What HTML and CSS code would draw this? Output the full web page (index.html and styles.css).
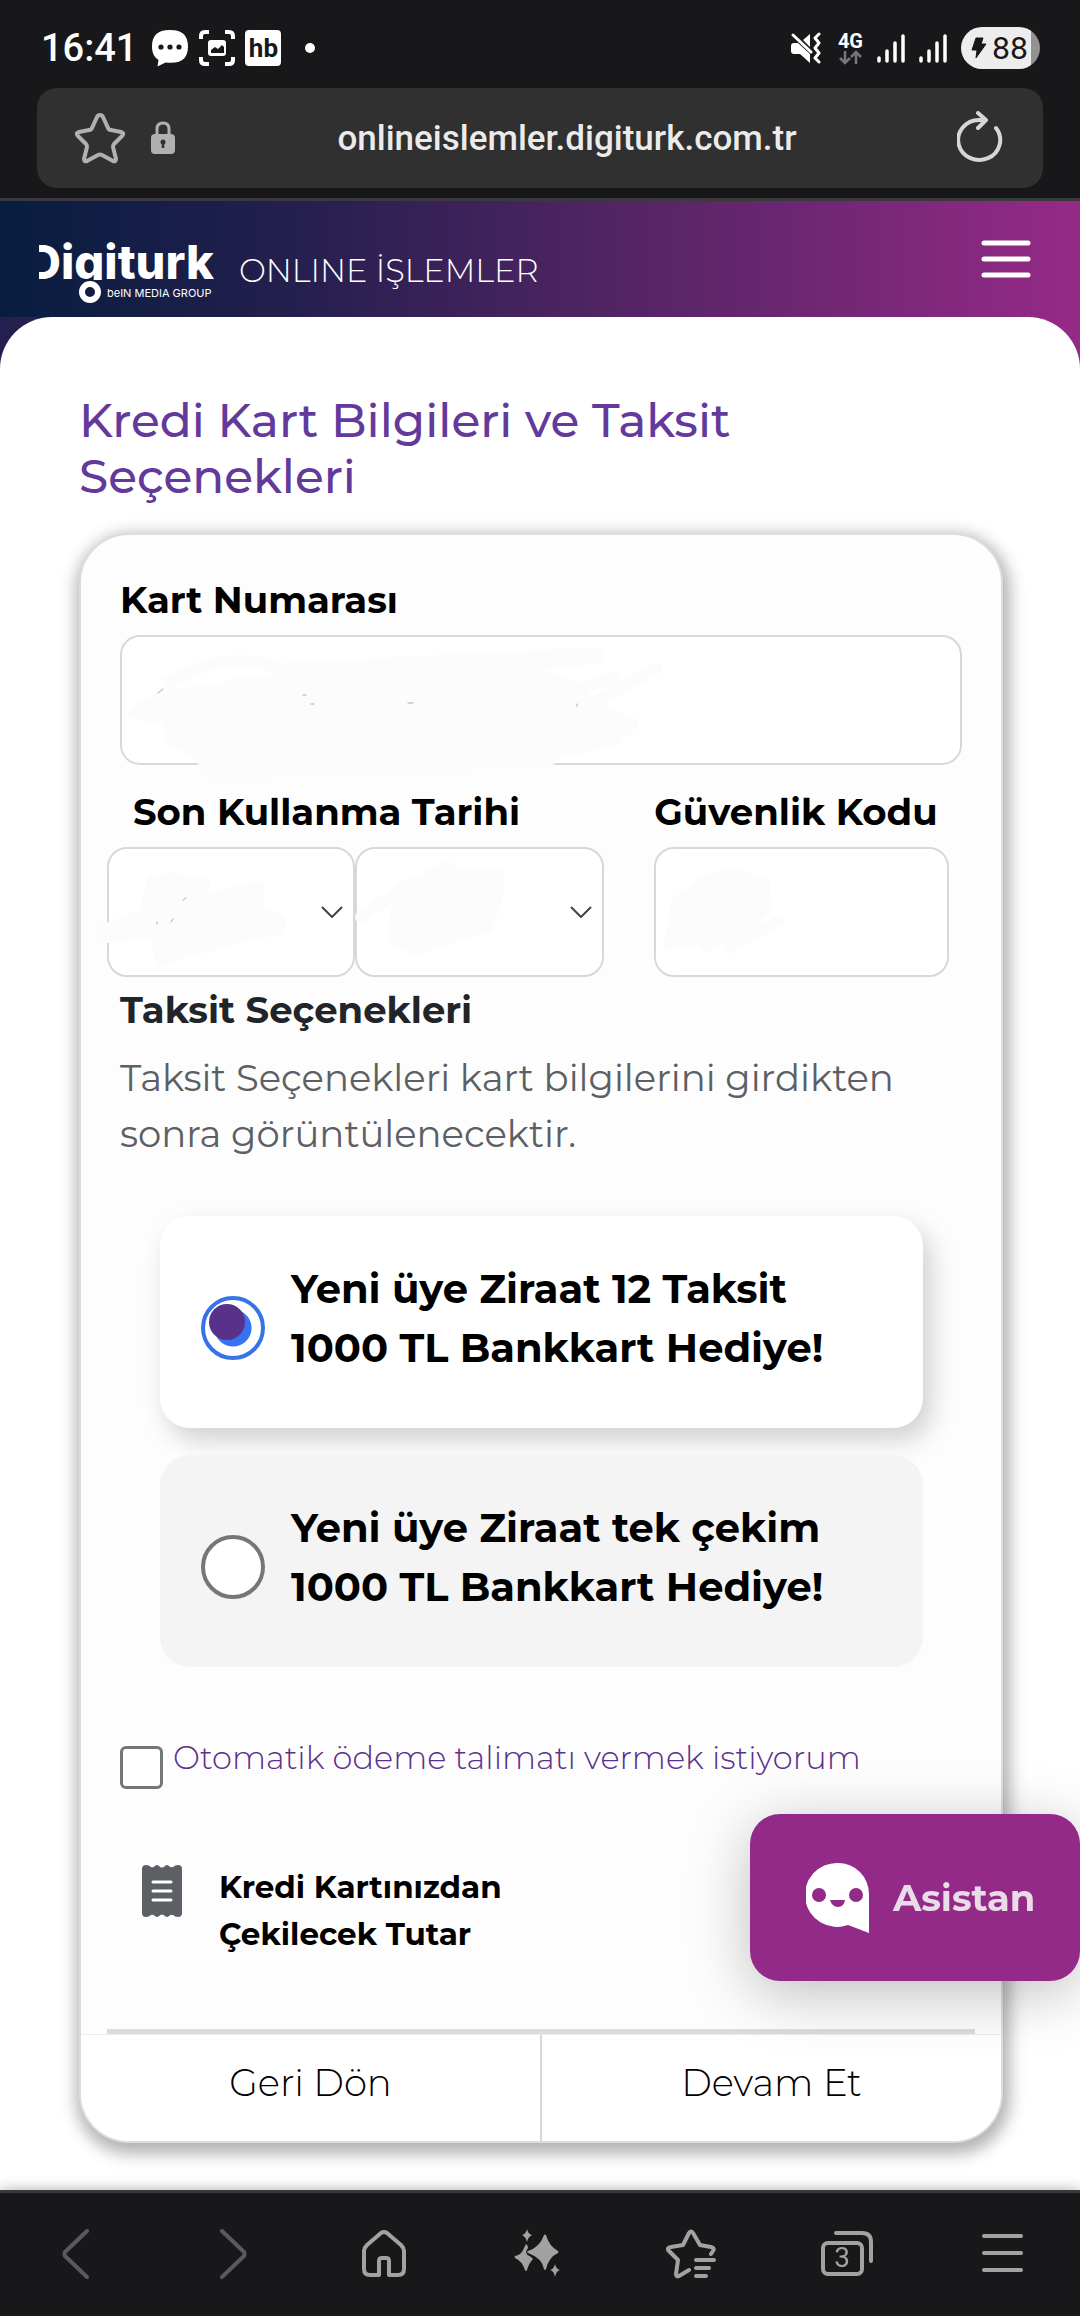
FILE: index.html
```html
<!DOCTYPE html>
<html lang="tr">
<head>
    <meta charset="UTF-8">
    <meta name="viewport" content="width=device-width, initial-scale=1.0">
    <title>Digiturk Online İşlemler</title>
    <link rel="stylesheet" href="styles.css">
</head>
<body>
    <div class="browser-top">
        <div class="status-bar">
            <span class="clock">16:41</span>
            <svg class="status-icon" viewBox="0 0 38 38" width="38" height="38">
                <path d="M19 1C6 1 1 7 1 17.500C1 24 3 28 7.500 31L6.500 37.500L14.500 33.500C31 35.500 37 29 37 17.500C37 7 32 1 19 1Z" fill="#fff"/>
                <circle cx="10" cy="18" r="2.600" fill="#18181a"/>
                <circle cx="19" cy="18" r="2.600" fill="#18181a"/>
                <circle cx="28" cy="18" r="2.600" fill="#18181a"/>
            </svg>
            <svg class="status-icon" viewBox="0 0 36 38" width="36" height="38">
                <path d="M2 10V7Q2 3 6 3H10M26 3H30Q34 3 34 7V10M34 28V31Q34 35 30 35H26M10 35H6Q2 35 2 31V28" fill="none" stroke="#fff" stroke-width="4"/>
                <rect x="9" y="11" width="18" height="16" rx="3" fill="#fff"/>
                <path d="M12 24V21L16 18L19 20L23 16L25 18V24Z" fill="#18181a"/>
            </svg>
            <span class="app-badge">hb</span>
            <span class="dot"></span>
            <svg class="mute" viewBox="0 0 32 32" width="32" height="32">
                <path d="M4 11H8L20 22V31L10 22H4Q1 22 1 19V14Q1 11 4 11ZM13 8L20 2V15Z" fill="#fff"/>
                <path d="M3 3L21 20" stroke="#fff" stroke-width="3" stroke-linecap="round"/>
                <path d="M29 2L25 6L29 11L25 16L29 21L25 26L29 30" fill="none" stroke="#fff" stroke-width="3" stroke-linejoin="round" stroke-linecap="round"/>
            </svg>
            <div class="network">
                <span>4G</span>
                <svg viewBox="0 0 24 15" width="24" height="15">
                    <path d="M7 1V13M2 8L7 13L12 8M18 14V2M13 7L18 2L23 7" fill="none" stroke="#77777a" stroke-width="2.500"/>
                </svg>
            </div>
            <svg class="signal" viewBox="0 0 28 32" width="28" height="32">
                <path d="M2 26V29M10 19V29M18 11V29M26 4V29" stroke="#fff" stroke-width="3.500" stroke-linecap="round"/>
            </svg>
            <svg class="signal" viewBox="0 0 28 32" width="28" height="32">
                <path d="M2 26V29M10 19V29M18 11V29M26 4V29" stroke="#fff" stroke-width="3.500" stroke-linecap="round"/>
            </svg>
            <div class="battery">
                <svg viewBox="0 0 16 22" width="16" height="22">
                    <path d="M5 1H12L10 7H15L5 21L6 13H1Z" fill="#18181a" stroke="#18181a" stroke-linejoin="round"/>
                </svg>
                <span>88</span>
            </div>
        </div>
        <div class="url-bar">
            <button type="button" class="icon-btn" aria-label="Yer imi">
                <svg viewBox="0 0 52 52" width="52" height="52">
                    <path d="M26 3Q28 3 29 5L34 16Q35 18 37 18L47 20Q51 21 48 24L40 32Q39 33 39 35L42 47Q42 50 39 49L28 43Q26 42 24 43L13 49Q10 50 10 47L13 35Q13 33 12 32L4 24Q1 21 5 20L15 18Q17 18 18 16L23 5Q24 3 26 3Z" fill="none" stroke="#b0b0b0" stroke-width="4" stroke-linejoin="round"/>
                </svg>
            </button>
            <svg class="lock" viewBox="0 0 24 34" width="24" height="34">
                <path d="M6 16V8Q6 2 12 2T18 8V16" fill="none" stroke="#b0b0b0" stroke-width="3"/>
                <rect x="0" y="13" width="24" height="20" rx="4" fill="#b0b0b0"/>
                <circle cx="12" cy="21" r="2.500" fill="#303030"/>
                <path d="M12 21V27" stroke="#303030" stroke-width="2.500"/>
            </svg>
            <span class="url">onlineislemler.digiturk.com.tr</span>
            <button type="button" class="icon-btn" aria-label="Yenile">
                <svg viewBox="0 0 46 54" width="46" height="54">
                    <path d="M39 17A21 20 0 1 1 22 9H28" fill="none" stroke="#d6d6d6" stroke-width="4" stroke-linecap="round"/>
                    <path d="M21 2L29 9L21 17" fill="none" stroke="#d6d6d6" stroke-width="4" stroke-linecap="round" stroke-linejoin="round"/>
                </svg>
            </button>
        </div>
    </div>

    <header class="site-header">
        <a href="#" class="brand">
            <svg class="logo" viewBox="0 0 180 70" width="180" height="70">
                <defs>
                    <clipPath id="wordmark"><rect x="0" y="0" width="180" height="46"/></clipPath>
                </defs>
                <g clip-path="url(#wordmark)">
                    <text class="logo-name" x="-12" y="45">Digiturk</text>
                </g>
                <circle cx="51" cy="58" r="8" fill="none" stroke="#fff" stroke-width="6"/>
                <text class="logo-sub" x="68" y="63">beIN MEDIA GROUP</text>
            </svg>
            <span class="brand-title">ONLINE İŞLEMLER</span>
        </a>
        <button type="button" class="menu-btn" aria-label="Menü">
            <svg viewBox="0 0 50 40" width="50" height="40">
                <path d="M3 4H47M3 20H47M3 36H47" stroke="#fff" stroke-width="5" stroke-linecap="round"/>
            </svg>
        </button>
    </header>

    <div class="page">
        <main class="content">
            <h1 class="page-title">Kredi Kart Bilgileri ve Taksit Seçenekleri</h1>

            <form class="card">
                <div class="card-body">
                    <label class="field-label" for="cardNumber">Kart Numarası</label>
                    <div class="field-wrap">
                        <input class="field" type="text" id="cardNumber" inputmode="numeric">
                        <svg class="smudge" viewBox="0 0 560 150" width="560" height="150">
                            <path d="M14 78L43 60L100 56L118 48L300 38L400 34L450 50L470 69L512 89L493 106L440 116L431 124L91 138L78 119L51 103L48 84Z"/>
                            <path d="M48 48Q110 12 160 34L475 18M300 44L478 22M440 60L495 42M470 70L536 33" fill="none"/>
                            <path class="speck" d="M38 58L43 54M183 60H186M191 69H194M288 68H293M457 69V71"/>
                        </svg>
                    </div>

                    <div class="field-row">
                        <div class="expiry">
                            <label class="field-label" for="expMonth">Son Kullanma Tarihi</label>
                            <div class="selects">
                                <div class="field-wrap">
                                    <select class="field" id="expMonth">
                                        <option value=""></option>
                                    </select>
                                    <svg class="smudge" viewBox="0 0 200 130" width="200" height="130">
                                        <path d="M-6 84L37 68L46 35L66 32L98 37L94 54L151 40L150 62L174 75L172 82L148 86L113 96L80 104L54 114L52 100L45 86L1 90Z"/>
                                        <path class="speck" d="M76 53L79 51M50 75V77M64 75L66 72"/>
                                    </svg>
                                </div>
                                <div class="field-wrap">
                                    <select class="field" id="expYear" aria-label="Yıl">
                                        <option value=""></option>
                                    </select>
                                    <svg class="smudge" viewBox="0 0 200 130" width="200" height="130">
                                        <path d="M38 93L44 54L70 32L92 20L100 28L143 27L142 50L132 80L100 89L62 102ZM58 34L6 70"/>
                                    </svg>
                                </div>
                            </div>
                        </div>
                        <div class="cvv">
                            <label class="field-label" for="cvv">Güvenlik Kodu</label>
                            <div class="field-wrap">
                                <input class="field" type="text" id="cvv" inputmode="numeric">
                                <svg class="smudge" viewBox="0 0 200 130" width="200" height="130">
                                    <path d="M15 97L24 55L50 34L80 27L110 38L112 62L84 82L53 100L46 94ZM125 73L75 101"/>
                                </svg>
                            </div>
                        </div>
                    </div>

                    <h2 class="section-title">Taksit Seçenekleri</h2>
                    <p class="hint">Taksit Seçenekleri kart bilgilerini girdikten sonra görüntülenecektir.</p>

                    <div class="options">
                        <label class="option selected">
                            <input type="radio" name="campaign" value="12" checked>
                            <span>Yeni üye Ziraat 12 Taksit<br>1000 TL Bankkart Hediye!</span>
                        </label>
                        <label class="option">
                            <input type="radio" name="campaign" value="1">
                            <span>Yeni üye Ziraat tek çekim<br>1000 TL Bankkart Hediye!</span>
                        </label>
                    </div>

                    <div class="auto-pay">
                        <input type="checkbox" id="autoPay">
                        <label for="autoPay">Otomatik ödeme talimatı vermek istiyorum</label>
                    </div>

                    <div class="total">
                        <svg viewBox="0 0 42 54" width="42" height="54">
                            <path d="M1 5Q1 1 5 1Q8 1 10 3Q12 4 14 2Q16 0 18 2Q21 5 24 2Q26 0 28 2Q30 4 32 3Q34 1 37 1Q41 1 41 5V49Q41 53 37 53Q34 53 32 51Q30 50 28 52Q26 54 24 52Q21 49 18 52Q16 54 14 52Q12 50 10 51Q8 53 5 53Q1 53 1 49Z" fill="#5c5f64"/>
                            <path d="M12 18H30M12 27H30M12 36H30" stroke="#fff" stroke-width="3" stroke-linecap="round"/>
                        </svg>
                        <span>Kredi Kartınızdan<br>Çekilecek Tutar</span>
                    </div>
                    <hr class="divider">
                </div>
                <div class="card-actions">
                    <button type="button">Geri Dön</button>
                    <button type="submit">Devam Et</button>
                </div>
            </form>
        </main>
    </div>

    <button type="button" class="assistant">
        <svg viewBox="0 0 64 72" width="64" height="72">
            <path d="M32 1A31 31 0 0 1 63 32V71L42 63A32 32 0 1 1 32 1Z" fill="#fff"/>
            <circle cx="13" cy="33" r="7" fill="#942a87"/>
            <circle cx="50" cy="33" r="7" fill="#942a87"/>
            <path d="M24 38H39Q38 45 32 45T24 38Z" fill="#942a87"/>
        </svg>
        <span>Asistan</span>
    </button>

    <nav class="browser-nav">
        <button type="button" aria-label="Geri">
            <svg viewBox="0 0 50 50" width="50" height="50"><path d="M35 2L13 23Q12 25 13 27L35 48" fill="none" stroke="#5a5a5c" stroke-width="4" stroke-linecap="round"/></svg>
        </button>
        <button type="button" aria-label="İleri">
            <svg viewBox="0 0 50 50" width="50" height="50"><path d="M16 2L38 23Q39 25 38 27L16 48" fill="none" stroke="#5a5a5c" stroke-width="4" stroke-linecap="round"/></svg>
        </button>
        <button type="button" aria-label="Ana sayfa">
            <svg viewBox="0 0 50 50" width="50" height="50"><path d="M20 46H11Q5 46 5 40V22Q5 19 8 16L22 4Q25 2 28 4L42 16Q45 19 45 22V40Q45 46 39 46H30V32Q30 29 27 29H23Q20 29 20 32Z" fill="none" stroke="#a2a2a3" stroke-width="4" stroke-linejoin="round"/></svg>
        </button>
        <button type="button" aria-label="Tarama asistanı">
            <svg viewBox="0 0 50 50" width="50" height="50">
                <g fill="#a2a2a3">
                    <path d="M14 0Q15 5 19 6Q15 8 14 13Q13 8 9 6Q13 5 14 0Z"/>
                    <path d="M13 15Q15 16 15 19Q10 25 18 28L20 30Q16 34 14 41Q13 43 12 41Q9 32 2 29Q1 28 2 27Q8 26 10 21Z"/>
                    <path d="M31 6Q32 5 33 6Q36 17 45 22Q46 23 45 24Q36 28 33 40Q32 42 31 40Q29 29 15 24Q13 23 15 22Q27 18 31 6Z"/>
                    <path d="M42 35Q43 40 47 41Q43 42 42 48Q41 42 37 41Q41 40 42 35Z"/>
                </g>
            </svg>
        </button>
        <button type="button" aria-label="Yer imleri">
            <svg viewBox="0 0 50 50" width="50" height="50">
                <path d="M45 25L47 22Q49 19 45 18L34 16L27 4Q25 1 23 4L17 16L5 18Q0 19 3 22L12 31L10 45Q10 48 13 47L23 41M30 31H48M30 39H43M30 47H40" fill="none" stroke="#a2a2a3" stroke-width="4" stroke-linecap="round" stroke-linejoin="round"/>
            </svg>
        </button>
        <button type="button" class="tabs-btn" aria-label="3 sekme">
            <svg viewBox="0 0 54 50" width="54" height="50">
                <rect x="3" y="14" width="39" height="31" rx="5" fill="none" stroke="#a2a2a3" stroke-width="4"/>
                <path d="M16 4H42Q51 4 51 13V32" fill="none" stroke="#a2a2a3" stroke-width="4" stroke-linecap="round"/>
                <text class="tab-count" x="22" y="38" text-anchor="middle">3</text>
            </svg>
        </button>
        <button type="button" aria-label="Menü">
            <svg viewBox="0 0 50 50" width="50" height="50"><path d="M7 7H44M7 24H44M7 41H44" stroke="#a2a2a3" stroke-width="4" stroke-linecap="round"/></svg>
        </button>
    </nav>
</body>
</html>
```
FILE: styles.css
```css
* {
    box-sizing: border-box;
}

body {
    margin: 0;
    min-height: 100vh;
    display: flex;
    flex-direction: column;
    background-color: #fff;
    font-family: "Montserrat", "Inter", "Open Sans", sans-serif;
    color: #000;
}

button {
    background: none;
    border: none;
    padding: 0;
    font-family: inherit;
    color: inherit;
    cursor: pointer;
}

svg {
    display: block;
    flex-shrink: 0;
}

/* browser top */
.browser-top {
    background-color: #18181a;
    border-bottom: 3px solid #3a3a3d;
    padding: 0 37px 10px;
    font-family: Roboto, sans-serif;
}

.status-bar {
    display: flex;
    align-items: center;
    height: 88px;
    padding: 8px 3px 0 4px;
    color: #fff;
}

.clock {
    font-size: 38px;
    font-weight: 500;
    margin-right: 14px;
}

.status-icon {
    margin-right: 10px;
}

.app-badge {
    width: 36px;
    height: 36px;
    border-radius: 4px;
    background-color: #fff;
    color: #18181a;
    font-size: 26px;
    font-weight: 700;
    line-height: 36px;
    text-align: center;
}

.dot {
    width: 10px;
    height: 10px;
    margin-left: 24px;
    border-radius: 50%;
    background-color: #fff;
}

.mute {
    margin-left: auto;
}

.network {
    margin: 0 14px 0 16px;
    font-size: 20px;
    font-weight: 700;
    line-height: 18px;
}

.signal {
    margin-right: 14px;
}

.battery {
    display: flex;
    align-items: center;
    gap: 5px;
    height: 42px;
    width: 79px;
    padding-left: 10px;
    border-radius: 21px;
    background: linear-gradient(to right, #ededed 88%, #929292 88%);
    color: #18181a;
    font-size: 32px;
    line-height: 42px;
}

.url-bar {
    display: flex;
    align-items: center;
    height: 100px;
    padding: 0 40px 0 37px;
    border-radius: 20px;
    background-color: #303030;
}

.lock {
    margin-left: 25px;
}

.url {
    flex: 1;
    padding-left: 2px;
    text-align: center;
    font-size: 35px;
    font-weight: 500;
    color: #ebebeb;
}

/* site header */
.site-header {
    display: flex;
    justify-content: space-between;
    height: 116px;
    padding: 0 49px 0 39px;
    background: linear-gradient(to right, #071d3f, #241f4e 27%, #4f2463 55%, #962a87);
    color: #fff;
}

.brand {
    display: flex;
    gap: 20px;
    color: #fff;
    text-decoration: none;
}

.logo {
    margin-top: 33px;
    overflow: visible;
}

.logo-name {
    font-family: Inter, sans-serif;
    font-size: 47px;
    font-weight: 800;
    fill: #fff;
}

.logo-sub {
    font-family: Inter, sans-serif;
    font-size: 11px;
    fill: #fff;
}

.brand-title {
    margin-top: 50px;
    font-size: 32px;
    font-weight: 300;
    line-height: 40px;
}

.menu-btn {
    align-self: flex-start;
    margin-top: 38px;
}

/* page */
.page {
    flex: 1;
    background: linear-gradient(to right, #241f4e, #962a87) top / 100% 60px no-repeat;
}

.content {
    min-height: 100%;
    padding: 76px 77px 160px 79px;
    border-radius: 52px 52px 0 0;
    background-color: #fff;
}

.page-title {
    margin: 0 0 28px;
    font-size: 47px;
    font-weight: 500;
    line-height: 56px;
    color: #633a9c;
}

.card {
    border: 2px solid #dcdcdc;
    border-radius: 50px;
    background-color: #fdfdfd;
    box-shadow: 2px 6px 16px 5px rgba(0, 0, 0, 0.3);
    overflow: hidden;
}

.card-body {
    padding: 40px 39px 0;
}

.field-label {
    display: block;
    margin-bottom: 10px;
    font-size: 37px;
    font-weight: 700;
    line-height: 50px;
}

.field-wrap {
    position: relative;
    flex: 1;
}

.field {
    display: block;
    width: 100%;
    height: 130px;
    padding: 0 30px;
    border: 2px solid #d8d8d8;
    border-radius: 20px;
    background-color: #fff;
    font-family: inherit;
    font-size: 37px;
    color: #212529;
}

select.field {
    appearance: none;
    background: url("data:image/svg+xml,%3Csvg xmlns='http://www.w3.org/2000/svg' width='22' height='12' viewBox='0 0 22 12'%3E%3Cpath d='M1 1L11 11L21 1' fill='none' stroke='%23444' stroke-width='2'/%3E%3C/svg%3E") right 10px center no-repeat #fff;
}

.smudge {
    position: absolute;
    top: 0;
    left: 0;
    overflow: visible;
    pointer-events: none;
    fill: #fcfcfc;
    stroke: #fcfcfc;
    stroke-width: 12;
    stroke-linecap: round;
    stroke-linejoin: round;
}

.smudge .speck {
    stroke: #aaa;
    stroke-width: 1;
}

.field-row {
    display: flex;
    justify-content: space-between;
    margin: 22px 13px 0 -13px;
}

.expiry {
    width: 59%;
}

.expiry .field-label {
    padding-left: 26px;
}

.selects {
    display: flex;
}

.cvv {
    width: 35%;
}

.section-title {
    margin: 8px 0 15px;
    font-size: 37px;
    font-weight: 700;
    line-height: 50px;
    color: #212529;
}

.hint {
    margin: 0;
    font-size: 37px;
    font-weight: 400;
    line-height: 56px;
    color: #5c5f63;
}

.options {
    display: flex;
    flex-direction: column;
    gap: 27px;
    margin: 54px 39px 76px 40px;
}

.option {
    display: flex;
    align-items: center;
    gap: 26px;
    height: 212px;
    padding-left: 41px;
    border-radius: 30px;
    background-color: #f4f4f4;
    font-size: 40px;
    font-weight: 700;
    line-height: 59px;
}

.option span {
    padding-bottom: 8px;
}

.option.selected {
    background-color: #fff;
    box-shadow: 8px 12px 26px rgba(0, 0, 0, 0.18);
}

.option input {
    appearance: none;
    position: relative;
    flex-shrink: 0;
    width: 64px;
    height: 64px;
    margin: 12px 0 0;
    border: 4px solid #767676;
    border-radius: 50%;
    background-color: #fff;
}

.option input:checked {
    border-color: #3673e6;
    background: radial-gradient(circle, #3673f0 18px, #fff 19px);
}

.option input:checked::before {
    content: '';
    position: absolute;
    top: 4px;
    left: 4px;
    width: 36px;
    height: 36px;
    border-radius: 50%;
    background-color: #59308a;
}

.auto-pay {
    display: flex;
    gap: 10px;
}

.auto-pay input {
    appearance: none;
    flex-shrink: 0;
    width: 43px;
    height: 43px;
    margin: 3px 0 0;
    border: 3px solid #767676;
    border-radius: 6px;
    background-color: #fff;
}

.auto-pay label {
    font-size: 32px;
    font-weight: 300;
    line-height: 30px;
    color: #59308a;
}

.total {
    display: flex;
    gap: 36px;
    margin: 75px 0 71px 21px;
    font-size: 31px;
    font-weight: 700;
    line-height: 47px;
}

.divider {
    height: 5px;
    margin: 0 -13px;
    border: none;
    background-color: #dcdcdc;
}

.card-actions {
    display: flex;
    border-top: 1px solid #ececec;
    background-color: #fff;
}

.card-actions button {
    flex: 1;
    height: 106px;
    padding-bottom: 12px;
    font-size: 37px;
    font-weight: 300;
}

.card-actions button + button {
    border-left: 2px solid #d8d8d8;
}

/* assistant */
.assistant {
    position: fixed;
    right: 0;
    bottom: 335px;
    display: flex;
    align-items: center;
    gap: 23px;
    width: 330px;
    height: 167px;
    padding-left: 56px;
    border-radius: 30px;
    background-color: #942a87;
    box-shadow: 0 12px 60px rgba(0, 0, 0, 0.25);
    font-size: 37px;
    font-weight: 700;
    color: #eadbe9;
}

/* browser bottom */
.browser-nav {
    position: fixed;
    left: 0;
    right: 0;
    bottom: 0;
    display: flex;
    justify-content: space-between;
    align-items: center;
    height: 126px;
    padding: 0 53px 2px 52px;
    border-top: 3px solid #3a3a3d;
    background-color: #18181a;
    box-shadow: 0 -2px 12px rgba(0, 0, 0, 0.25);
}

.tab-count {
    font-family: Roboto, sans-serif;
    font-size: 28px;
    fill: #a2a2a3;
}
```
